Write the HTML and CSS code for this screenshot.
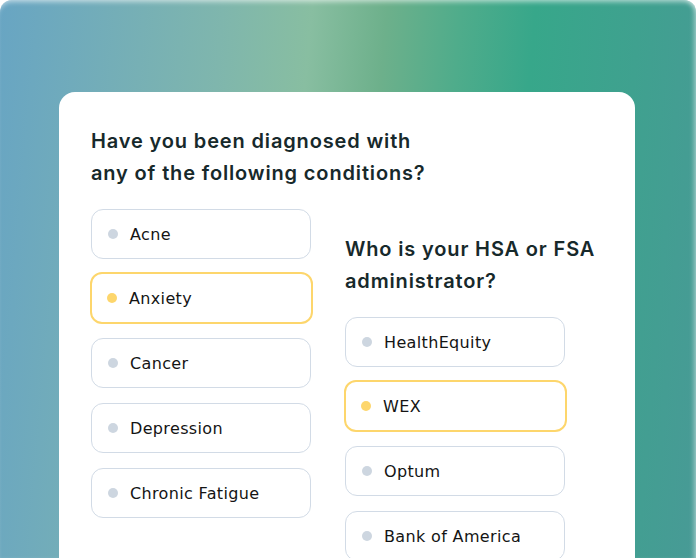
FILE: index.html
```html
<!DOCTYPE html>
<html>
<head>
<meta charset="utf-8">
<link rel="stylesheet" href="styles.css">
</head>
<body>
<div class="bg">
  <div class="card">
    <div class="col">
      <h2 class="q">Have you been diagnosed with any of the following conditions?</h2>
      <div class="opts">
        <div class="opt"><span class="dot"></span>Acne</div>
        <div class="opt sel"><span class="dot"></span>Anxiety</div>
        <div class="opt"><span class="dot"></span>Cancer</div>
        <div class="opt"><span class="dot"></span>Depression</div>
        <div class="opt"><span class="dot"></span>Chronic Fatigue</div>
      </div>
    </div>
    <div class="col col-right">
      <h2 class="q">Who is your HSA or FSA administrator?</h2>
      <div class="opts">
        <div class="opt"><span class="dot"></span>HealthEquity</div>
        <div class="opt sel"><span class="dot"></span>WEX</div>
        <div class="opt"><span class="dot"></span>Optum</div>
        <div class="opt"><span class="dot"></span>Bank of America</div>
      </div>
    </div>
  </div>
</div>
</body>
</html>
```
FILE: styles.css
```css
html, body {
  margin: 0;
  padding: 0;
  background: #ffffff;
  width: 696px;
  height: 558px;
  overflow: hidden;
}
.bg {
  width: 696px;
  height: 558px;
  box-sizing: border-box;
  border-radius: 12px 12px 0 0;
  background: linear-gradient(95deg, #68a5c3 0%, #7fb6ad 30%, #88bea1 42%, #6db08b 52%, #4fac8b 62%, #37a78a 72%, #3fa18f 86%, #489a96 100%);
  box-shadow: inset 0 5px 5px -3px rgba(255,255,255,0.55), inset -5px 0 5px -3px rgba(255,255,255,0.45);
  padding: 92px 61px 0 59px;
  font-family: "DejaVu Sans", "Open Sans", sans-serif;
}
.card {
  background: #ffffff;
  border-radius: 16px 16px 0 0;
  height: 466px;
  box-sizing: border-box;
  padding: 33px 32px 0 32px;
  display: flex;
  gap: 34px;
}
.col {
  width: 220px;
  flex: none;
}
.col-right {
  padding-top: 108px;
  width: 260px;
}
.q {
  margin: 0 0 20px 0;
  font-family: "Inter", "Open Sans", sans-serif;
  font-size: 20px;
  line-height: 32px;
  font-weight: 600;
  letter-spacing: 0.85px;
  color: #17292b;
  width: 345px;
}
.col-right .q { width: 270px; }
.opts {
  display: flex;
  flex-direction: column;
  gap: 15px;
}
.opt {
  width: 220px;
  height: 50px;
  box-sizing: border-box;
  border: 1px solid #d2dbe6;
  border-radius: 12px;
  display: flex;
  align-items: center;
  padding-left: 16px;
  font-size: 16px;
  letter-spacing: 0.35px;
  color: #141414;
  background: #fff;
}
.opt.sel {
  border: 2px solid #fdd66c;
  padding-left: 15px;
  width: 223px;
  height: 52px;
  margin: -2px 0 -1px -1px;
}
.dot {
  width: 10px;
  height: 10px;
  border-radius: 50%;
  background: #cdd6e0;
  margin-right: 12px;
  flex: none;
}
.sel .dot { background: #fdd66c; }
```
